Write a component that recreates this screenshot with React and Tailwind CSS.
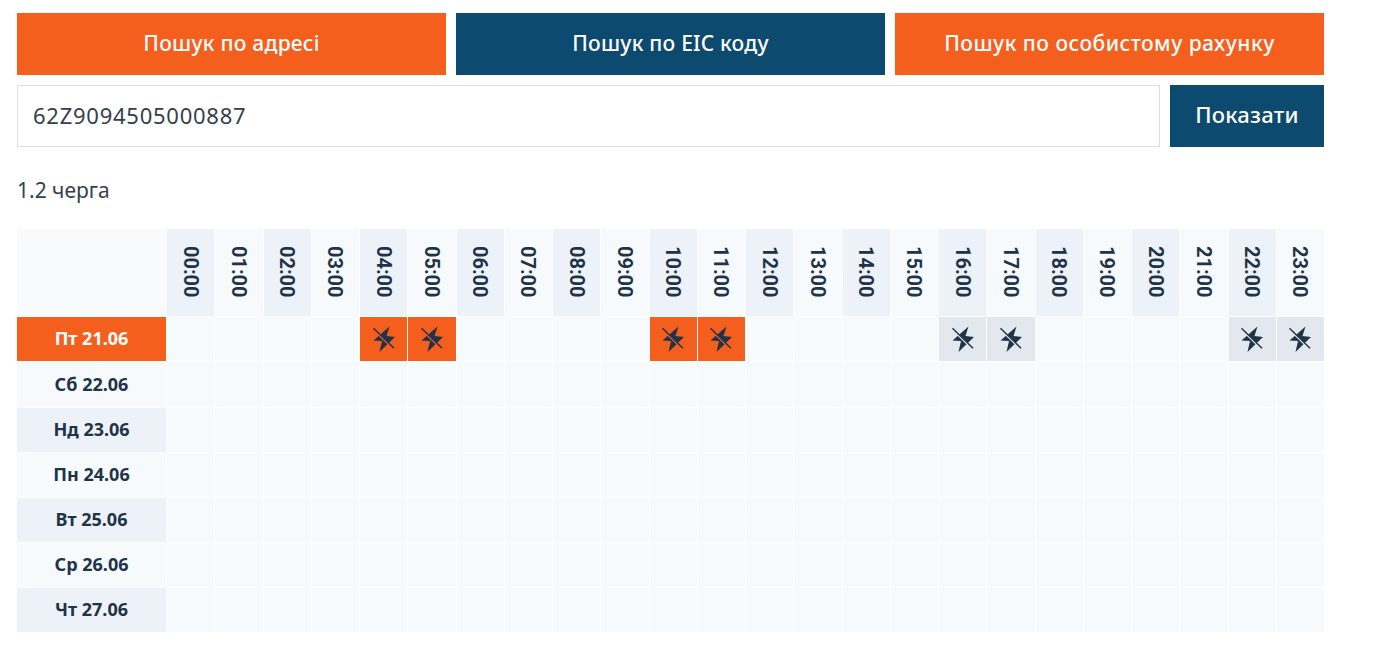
const hours = Array.from({ length: 24 }, (_, i) => String(i).padStart(2, "0") + ":00");
const days = ["Пт 21.06", "Сб 22.06", "Нд 23.06", "Пн 24.06", "Вт 25.06", "Ср 26.06", "Чт 27.06"];
const orange = [4, 5, 10, 11];
const grey = [16, 17, 22, 23];

function Bolt({ bg }) {
  return (
    <svg width="26" height="26" viewBox="0 0 26 26">
      <path d="M18.5 0.5 L2.5 14.5 L11 15 L8.5 26 L24 11 L15.5 10 Z" fill="#1f3349" />
      <path d="M2.5 3.2 L23 23.2" stroke={bg} strokeWidth="2.2" />
      <path d="M2.5 2.2 L23 22.2" stroke="#1f3349" strokeWidth="1.4" />
    </svg>
  );
}

function Btn({ children, active, wide }) {
  return (
    <button className={`h-[62px] text-white text-[21px] font-medium ${wide ? "tracking-[0.5px]" : "tracking-[0.25px]"} ${active ? "bg-[#0d4a70]" : "bg-[#f55f1e]"}`}>
      {children}
    </button>
  );
}

export default function App() {
  return (
    <div className="bg-white min-h-[652px] pl-[17px] pt-[13px] w-[1307px] box-content text-[#1f3349] font-['Noto_Sans',sans-serif]">
      <div className="grid grid-cols-3 gap-[10px]">
        <Btn>Пошук по адресі</Btn>
        <Btn active>Пошук по EIC коду</Btn>
        <Btn wide>Пошук по особистому рахунку</Btn>
      </div>
      <div className="flex gap-[10px] mt-[10px]">
        <div className="flex-1 h-[62px] border border-[#d9dde5] flex items-center px-[15px] pb-[2px] text-[22px] text-[#333f4d] tracking-[0.75px]">
          62Z9094505000887
        </div>
        <button className="w-[154px] h-[62px] pb-[3px] bg-[#0d4a70] text-white text-[22px] font-medium tracking-[0.25px]">Показати</button>
      </div>
      <div className="mt-[28px] mb-[24px] text-[21px] leading-[30px] text-[#333f4d]">1.2 черга</div>
      <div className="grid grid-cols-[149px_repeat(24,minmax(0,1fr))] gap-px w-[1307px]">
        <div className="h-[87px] bg-[#f9fafb]" />
        {hours.map((h, i) => (
          <div key={h} className={`h-[87px] flex items-center justify-center pb-px ${i % 2 ? "bg-[#f7fafd]" : "bg-[#edf2f8]"}`}>
            <span className="[writing-mode:vertical-rl] font-['Roboto',sans-serif] font-bold text-[20px] leading-none">{h}</span>
          </div>
        ))}
        {days.map((d, r) => (
          <div key={d} className="contents">
            <div className={`flex items-center justify-center text-[18px] font-bold ${r === 1 ? "h-[45px]" : "h-11 pb-px"} ${r === 0 ? "bg-[#f55f1e] text-white" : r % 2 ? "bg-[#f7fafd]" : "bg-[#edf2f8]"}`}>
              {d}
            </div>
            {hours.map((h, i) => {
              const on = r === 0 && orange.includes(i);
              const off = r === 0 && grey.includes(i);
              return (
                <div key={h} className={`flex items-center justify-center ${r === 1 ? "h-[45px]" : "h-11"} ${on ? "bg-[#f55f1e]" : off ? "bg-[#e3e7ee]" : "bg-[#f7fafd]"}`}>
                  {on && <Bolt bg="#f55f1e" />}
                  {off && <Bolt bg="#e3e7ee" />}
                </div>
              );
            })}
          </div>
        ))}
      </div>
    </div>
  );
}
